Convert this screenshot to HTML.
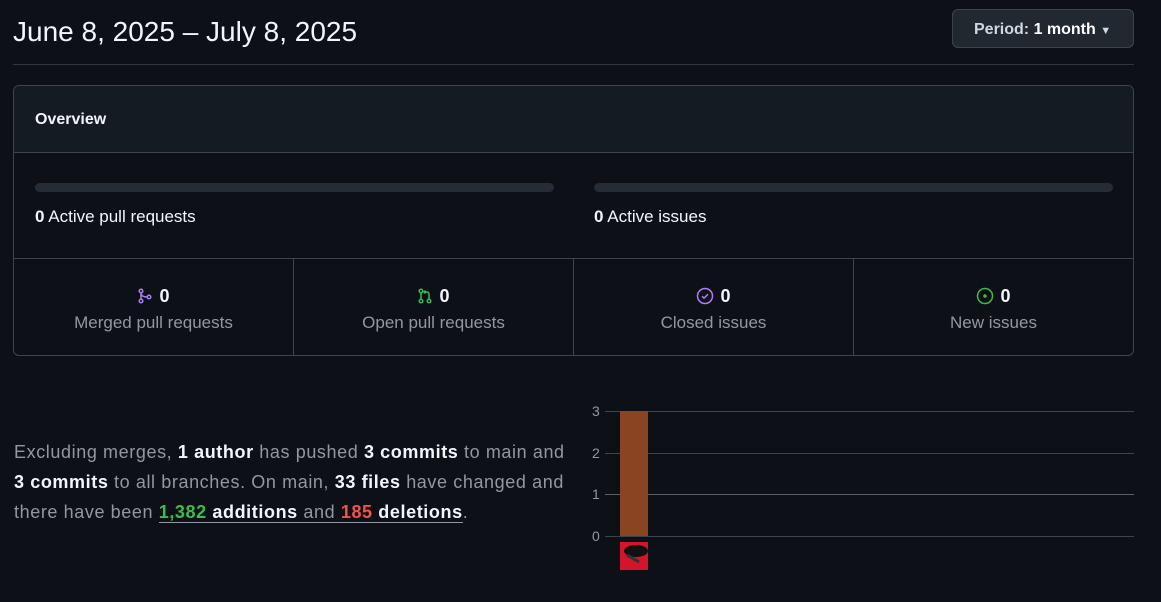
<!DOCTYPE html>
<html><head><style>
*{margin:0;padding:0;box-sizing:border-box}
body{width:1161px;height:602px;background:#0d1117;font-family:"Liberation Sans",sans-serif;color:#f0f6fc;position:relative;overflow:hidden}
.abs{position:absolute}
h1{position:absolute;left:13px;top:16px;font-size:28px;font-weight:400;color:#f0f6fc}
.hr{left:13px;top:64px;width:1121px;height:1px;background:#30363d}
.btn{left:952px;top:9px;width:182px;height:39px;background:#212830;border:1px solid #3d444d;border-radius:6px;font-size:16px;font-weight:bold;color:#d1d7e0;line-height:40px;padding-left:21px}
.box{left:13px;top:85px;width:1121px;height:271px;border:1px solid #3d444d;border-radius:6px;overflow:hidden}
.head{height:67px;background:#151b23;border-bottom:1px solid #3d444d;font-weight:bold;font-size:16px;padding:25px 0 0 21px}
.bar{height:9px;background:#262c36;border-radius:5px;top:97px}
.lbl{font-size:17px;top:121px}
.row{top:172px;left:0;width:1119px;height:98px;border-top:1px solid #3d444d;display:flex}
.cell{flex:1;border-left:1px solid #3d444d;text-align:center;padding-top:26px}
.cell:first-child{border-left:none}
.n{font-size:18px;font-weight:bold;display:flex;justify-content:center;align-items:center;gap:6px;height:22px}
.t{font-size:17px;color:#9198a1;margin-top:6px}
.p{left:14px;top:437px;width:562px;font-size:18px;line-height:30px;color:#9198a1;letter-spacing:0.6px}
.p b{color:#f0f6fc}
.nw{white-space:nowrap}
.g{left:605px;width:529px;height:1px;background:#3d444d}
.y{left:592px;font-size:14px;color:#9198a1}
</style></head><body>
<h1>June 8, 2025 – July 8, 2025</h1>
<div class="abs hr"></div>
<div class="abs btn">Period: <span style="color:#fff">1 month</span> <span style="font-size:11px">▼</span></div>
<div class="abs box">
<div class="head">Overview</div>
<div class="abs bar" style="left:21px;width:519px"></div>
<div class="abs bar" style="left:580px;width:519px"></div>
<div class="abs lbl" style="left:21px"><b>0</b> Active pull requests</div>
<div class="abs lbl" style="left:580px"><b>0</b> Active issues</div>
<div class="abs row">
<div class="cell"><div class="n"><svg width="16" height="16" viewBox="0 0 16 16" fill="none" stroke="#ab7df8" stroke-width="1.5"><circle cx="4" cy="3" r="1.8"/><circle cx="4" cy="13" r="1.8"/><circle cx="12" cy="9" r="1.8"/><path d="M4 5v6M4 5c0 3 3 4 6 4"/></svg>0</div><div class="t">Merged pull requests</div></div>
<div class="cell"><div class="n"><svg width="16" height="16" viewBox="0 0 16 16" fill="none" stroke="#3fb950" stroke-width="1.5"><circle cx="4" cy="3" r="1.8"/><circle cx="4" cy="13" r="1.8"/><circle cx="12" cy="13" r="1.8"/><path d="M4 5v6M12 11V6a2 2 0 0 0-2-2H7M8.5 2.5L7 4l1.5 1.5"/></svg>0</div><div class="t">Open pull requests</div></div>
<div class="cell"><div class="n"><svg width="18" height="18" viewBox="0 0 18 18" fill="none" stroke="#ab7df8" stroke-width="1.5"><circle cx="9" cy="9" r="7.5"/><path d="M6 9.2l2 2 4-4"/></svg>0</div><div class="t">Closed issues</div></div>
<div class="cell"><div class="n"><svg width="18" height="18" viewBox="0 0 18 18" fill="none" stroke="#3fb950" stroke-width="1.5"><circle cx="9" cy="9" r="7.5"/><circle cx="9" cy="9" r="1" fill="#3fb950"/></svg>0</div><div class="t">New issues</div></div>
</div></div>
<div class="abs p">Excluding merges, <b>1 author</b> has pushed <b class="nw">3 commits</b> to main and <b class="nw">3 commits</b> to all branches. On main, <b class="nw">33 files</b> have changed and there have been <span style="border-bottom:1px solid #9198a1"><b style="color:#3fb950">1,382</b> <b>additions</b> and <b style="color:#f85149">185</b> <b>deletions</b></span>.</div>
<div class="abs g" style="top:411px"></div>
<div class="abs g" style="top:453px"></div>
<div class="abs g" style="top:494px;background:#59606a"></div>
<div class="abs g" style="top:536px"></div>
<div class="abs y" style="top:403px">3</div>
<div class="abs y" style="top:445px">2</div>
<div class="abs y" style="top:486px">1</div>
<div class="abs y" style="top:528px">0</div>
<div class="abs" style="left:620px;top:411px;width:28px;height:125px;background:#8a4421"></div>
<div class="abs" style="left:620px;top:542px;width:28px;height:28px;background:#d4142a;overflow:hidden"><div style="position:absolute;left:4px;top:3px;width:24px;height:12px;border-radius:50%;background:#111"></div><div style="position:absolute;left:6px;top:15px;width:14px;height:3px;background:#333;transform:rotate(30deg)"></div></div>
</body></html>
